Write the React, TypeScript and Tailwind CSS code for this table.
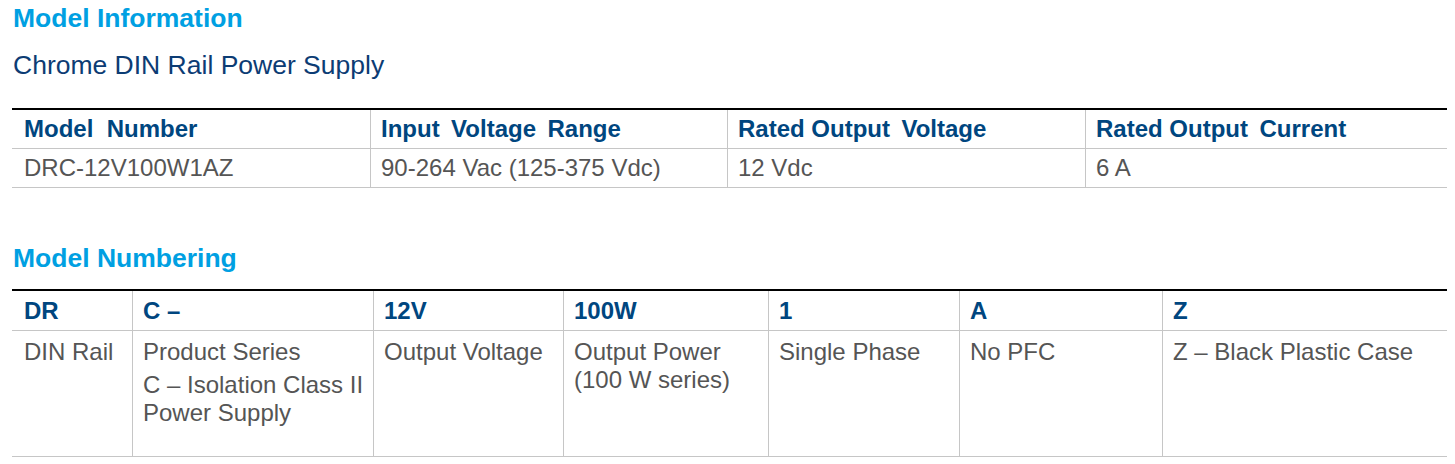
const font = { fontFamily: '"Liberation Sans", Arial, sans-serif' };

const info = [
  { head: 'Model\u00a0 Number', value: 'DRC-12V100W1AZ' },
  { head: 'Input\u2009 Voltage\u2009 Range', value: '90-264 Vac (125-375 Vdc)' },
  { head: 'Rated Output\u2009 Voltage', value: '12 Vdc' },
  { head: 'Rated Output\u2009 Current', value: '6 A' },
];

const numbering = [
  { code: 'DR', lines: [['DIN Rail']] },
  { code: 'C \u2013', lines: [['Product Series'], ['C \u2013 Isolation Class II', 'Power Supply']] },
  { code: '12V', lines: [['Output Voltage']] },
  { code: '100W', lines: [['Output Power', '(100 W series)']] },
  { code: '1', lines: [['Single Phase']] },
  { code: 'A', lines: [['No PFC']] },
  { code: 'Z', lines: [['Z \u2013 Black Plastic Case']] },
];

export default function App() {
  return (
    <div className="min-h-screen bg-white pl-[12px] pr-[8px] pt-[3px]" style={font}>
      <h2 className="pl-[1px] text-[26.5px] font-bold leading-[30px] text-[#00a0e2]">
        Model Information
      </h2>
      <p className="mt-[17px] pl-[1px] text-[26.5px] leading-[30px] text-[#0c3c74]">
        Chrome DIN Rail Power Supply
      </p>

      {/* model information table */}
      <div className="mt-[28px] border-t-2 border-black">
        <div className="grid grid-cols-[358px_357px_358px_1fr] border-b border-[#c6c6c6]">
          {info.map((c, i) => (
            <div
              key={c.head}
              className={`h-[38px] text-[24px] font-bold leading-[38px] whitespace-nowrap text-[#00467f] ${i > 0 ? 'border-l border-[#c6c6c6] pl-[10px]' : 'pl-[12px]'}`}
            >
              {c.head}
            </div>
          ))}
        </div>
        <div className="grid grid-cols-[358px_357px_358px_1fr] border-b border-[#c6c6c6]">
          {info.map((c, i) => (
            <div
              key={c.value}
              className={`h-[38px] text-[24px] leading-[38px] whitespace-nowrap text-[#555555] ${i > 0 ? 'border-l border-[#c6c6c6] pl-[10px]' : 'pl-[12px]'}`}
            >
              {c.value}
            </div>
          ))}
        </div>
      </div>

      <h2 className="mt-[55px] pl-[1px] text-[26.5px] font-bold leading-[30px] text-[#00a0e2]">
        Model Numbering
      </h2>

      {/* model numbering table */}
      <div className="mt-[16px] border-t-2 border-black">
        <div className="grid grid-cols-[120px_241px_190px_205px_191px_203px_1fr] border-b border-[#c6c6c6]">
          {numbering.map((c, i) => (
            <div
              key={c.code}
              className={`h-[39px] text-[24px] font-bold leading-[39px] text-[#00467f] ${i > 0 ? 'border-l border-[#c6c6c6] pl-[10px]' : 'pl-[12px]'}`}
            >
              {c.code}
            </div>
          ))}
        </div>
        <div className="grid grid-cols-[120px_241px_190px_205px_191px_203px_1fr] border-b border-[#c6c6c6]">
          {numbering.map((c, i) => (
            <div
              key={c.code}
              className={`h-[125px] pt-[7px] text-[24px] leading-[28px] whitespace-nowrap text-[#555555] ${i > 0 ? 'border-l border-[#c6c6c6] pl-[10px]' : 'pl-[12px]'}`}
            >
              {c.lines.map((para, j) => (
                <p key={j} className={j > 0 ? 'mt-[5px]' : ''}>
                  {para.map((line, k) => (
                    <span key={k} className="block">
                      {line}
                    </span>
                  ))}
                </p>
              ))}
            </div>
          ))}
        </div>
      </div>
    </div>
  );
}
